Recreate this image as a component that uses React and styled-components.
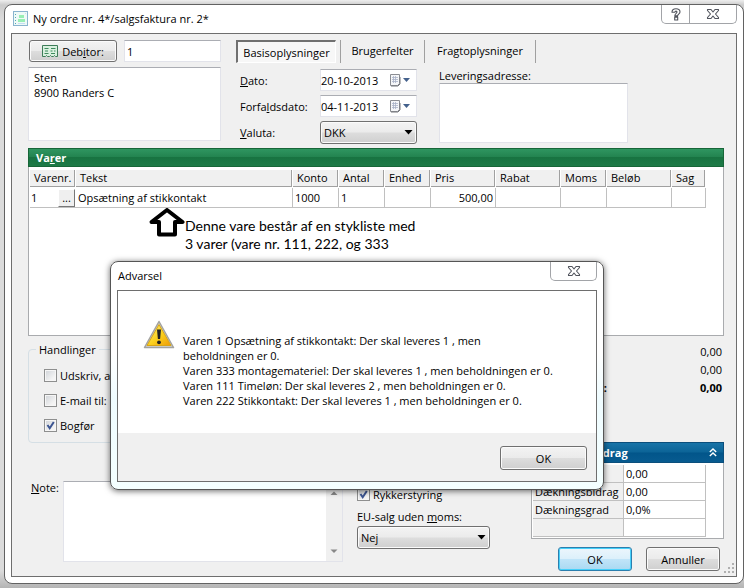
import React from "react";
import styled, { createGlobalStyle, css } from "styled-components";

const Global = createGlobalStyle`
  * { box-sizing: border-box; }
  body {
    margin: 0;
    background: #dcdcdc;
    color: #000;
    font: 11px/15px "Open Sans", "Noto Sans", sans-serif;
  }
  button, input, select, textarea { font: inherit; color: inherit; margin: 0; }
`;

const face = css`
  border: 1px solid #707070;
  border-radius: 3px;
  background: linear-gradient(#f3f3f3, #ebebeb 48%, #dddddd 52%, #cfcfcf);
  box-shadow: inset 0 0 0 1px #fbfbfb;
`;

const field = css`
  border: 1px solid #e2e3ea;
  border-top-color: #abadb3;
  background: #fff;
  outline: none;
`;

const Page = styled.main`
  position: relative;
  min-width: 744px;
  padding: 4px 0 4px 4px;
  background: linear-gradient(#eeeeee, #cccccc 5px, #dcdcdc 20px, #dcdcdc 97%, #b4b4b4);
`;

const OrderWindow = styled.section`
  padding: 0 6px 6px;
  border: 1px solid #626262;
  border-radius: 8px;
  background: #fff;
`;

const TitleBar = styled.header`
  display: flex;
  align-items: flex-start;
  justify-content: space-between;
  height: 28px;
`;

const Title = styled.h1`
  display: flex;
  align-items: center;
  gap: 5px;
  height: 27px;
  margin: 0 0 0 2px;
  font-size: 11px;
  font-weight: 400;
`;

const Caption = styled.div`
  display: flex;
  height: 19px;
  border: 1px solid #a2a4a8;
  border-top: 0;
  border-radius: 0 0 5px 5px;
`;

const CaptionButton = styled.button`
  display: grid;
  place-items: center;
  width: ${(p) => p.$width}px;
  padding: 0;
  border: 0;
  background: none;
  & + & { border-left: 1px solid #a2a4a8; }
`;

const Client = styled.div`
  padding: 6px 12px 5px 16px;
  border: 1px solid #6e6e6e;
  background: #f0f0f0;
`;

const Top = styled.div`
  display: flex;
  gap: 15px;
  height: 108px;
`;

const Customer = styled.div`
  display: flex;
  flex-direction: column;
  gap: 5px;
  width: 193px;
`;

const CustomerLine = styled.div`
  display: flex;
  justify-content: space-between;
  padding-left: 1px;
`;

const PushButton = styled.button`
  ${face}
  display: flex;
  align-items: center;
  justify-content: center;
  gap: 4px;
  width: ${(p) => p.$width}px;
  height: ${(p) => p.$height || 22}px;
  padding: 0;
  ${(p) =>
    p.$primary &&
    css`
      border-color: #2c7fae;
      background: linear-gradient(#ecf6fc, #dcf0fb 48%, #c0e4f8 52%, #a9d9f2);
      box-shadow: inset 0 0 0 1px #45d0fa;
    `}
`;

const TextBox = styled.input`
  ${field}
  width: ${(p) => p.$width}px;
  height: 22px;
  padding: 0 2px;
`;

const TextArea = styled.textarea`
  ${field}
  display: block;
  width: ${(p) => (p.$width ? `${p.$width}px` : "100%")};
  height: ${(p) => p.$height}px;
  padding: 2px 5px;
  resize: none;
`;

const Details = styled.div`
  flex: 1;
`;

const Tabs = styled.div`
  display: flex;
  height: 23px;
`;

const Tab = styled.button`
  width: ${(p) => p.$width}px;
  padding: 0 0 2px;
  border: 0;
  border-right: 1px solid #a0a0a0;
  background: none;
  white-space: nowrap;
  ${(p) =>
    p.$active &&
    css`
      margin-right: 4px;
      padding: 0;
      border: 1px solid #fff;
      border-top: 2px solid #707070;
      border-left: 2px solid #707070;
      background: #f7f7f7;
    `}
`;

const TabRule = styled.span`
  width: 1px;
  background: #a0a0a0;
`;

const DetailColumns = styled.div`
  display: flex;
  gap: 22px;
  padding: 6px 0 0 4px;
`;

const Fields = styled.div`
  display: grid;
  grid-template-columns: 80px 97px;
  grid-auto-rows: 22px;
  row-gap: 4px;
  align-items: center;
`;

const DateField = styled.div`
  ${field}
  display: flex;
  align-items: center;
  height: 22px;
`;

const DateInput = styled.input`
  width: 68px;
  padding: 0;
  border: 0;
  background: none;
  outline: none;
`;

const IconButton = styled.button`
  display: flex;
  padding: 0;
  border: 0;
  background: none;
`;

const SelectFrame = styled.div`
  ${face}
  display: flex;
  align-items: center;
  height: 23px;
  padding-right: 3px;
`;

const Select = styled.select`
  flex: 1;
  padding: 0 3px;
  border: 0;
  background: none;
  appearance: none;
  outline: none;
`;

const Delivery = styled.div`
  display: flex;
  flex-direction: column;
`;

const DeliveryLabel = styled.label`
  line-height: 14px;
`;

const Lines = styled.section`
  position: relative;
`;

const LinesTitle = styled.h2`
  height: 19px;
  margin: 0;
  padding: 1px 7px;
  border: 1px solid #176638;
  background: linear-gradient(#2f9560, #238450 45%, #187341 50%, #1d7a47);
  color: #fff;
  font-size: 11px;
  line-height: 15px;
  font-weight: 700;
`;

const LinesBody = styled.div`
  height: 169px;
  padding: 3px 17px 0 1px;
  border: 1px solid #a9abae;
  border-top: 0;
  background: #fff;
`;

const LinesTable = styled.table`
  width: 100%;
  table-layout: fixed;
  border-spacing: 0;
`;

const HeadCell = styled.th`
  width: ${(p) => (p.$width ? `${p.$width}px` : "auto")};
  height: 18px;
  padding: 0 1px 1px 0;
  background: #fff;
  font-weight: 400;
  text-align: left;
`;

const HeadFace = styled.div`
  height: 17px;
  padding-left: 4px;
  border-right: 1px solid #a0a0a0;
  border-bottom: 1px solid #a0a0a0;
  background: #f0f0f0;
  line-height: 16px;
  white-space: nowrap;
`;

const Cell = styled.td`
  height: 20px;
  padding: 0 2px;
  border-right: 1px solid #c0c0c0;
  border-bottom: 1px solid #c0c0c0;
  text-align: ${(p) => p.$align || "left"};
  white-space: nowrap;
`;

const NumberCell = styled(Cell)`
  padding: 0 1px;
  border-right: 0;
`;

const NumberLine = styled.div`
  display: flex;
  align-items: center;
  justify-content: space-between;
`;

const Lookup = styled.button`
  width: 17px;
  height: 18px;
  padding: 0;
  border: 1px solid #fff;
  border-right-color: #777;
  border-bottom-color: #777;
  background: #efefef;
  line-height: 8px;
`;

const Callout = styled.div`
  position: absolute;
  top: 60px;
  left: 121px;
  display: flex;
`;

const CalloutText = styled.p`
  margin: 9px 0 0;
  font: 14px/18px Lato, sans-serif;
`;

const Lower = styled.div`
  display: flex;
  justify-content: space-between;
`;

const LowerLeft = styled.div`
  width: 462px;
  padding-top: 6px;
`;

const Actions = styled.fieldset`
  height: 101px;
  margin: 0;
  padding: 6px 15px 0;
  border: 1px solid #d5dfe5;
  border-radius: 4px;
`;

const Legend = styled.legend`
  margin-left: -8px;
  padding: 0 3px;
`;

const Check = styled.label`
  display: flex;
  align-items: center;
  gap: 3px;
  height: ${(p) => p.$height}px;
  white-space: nowrap;
`;

const Tick = styled.span`
  position: relative;
  display: flex;
  width: 13px;
  height: 13px;
  svg { position: absolute; inset: 0; display: none; pointer-events: none; }
  input:checked + svg { display: block; }
`;

const TickInput = styled.input`
  width: 13px;
  height: 13px;
  appearance: none;
  border: 1px solid #8e8f8f;
  background: linear-gradient(135deg, #cfd3d8, #f4f4f4 75%);
  box-shadow: inset 0 0 0 1px #f6f6f6;
`;

const NoteRow = styled.div`
  display: flex;
  align-items: flex-start;
  margin-top: 38px;
`;

const NoteLabel = styled.label`
  width: 35px;
  padding-left: 3px;
  line-height: 13px;
`;

const NoteBox = styled.div`
  ${field}
  display: flex;
  width: 280px;
  height: 81px;
`;

const NoteInput = styled.textarea`
  flex: 1;
  border: 0;
  background: none;
  outline: none;
  resize: none;
`;

const ScrollTrack = styled.div`
  display: flex;
  flex-direction: column;
  justify-content: space-between;
  align-items: center;
  width: 16px;
  padding: 9px 0 7px;
  background: #f0f0f0;
`;

const Options = styled.div`
  width: 133px;
  margin-left: 14px;
  padding-top: 4px;
`;

const OptionLabel = styled.label`
  display: block;
  padding: 6px 0 2px;
`;

const LowerRight = styled.div`
  width: 193px;
`;

const Totals = styled.div`
  display: grid;
  grid-template-columns: 76px 1fr;
  height: 106px;
  padding: 7px 2px 0 0;
  grid-auto-rows: 18px;
  line-height: 18px;
  text-align: right;
`;

const Margin = styled.section`
  border: 1px solid #a9abae;
  background: #fff;
`;

const MarginTitle = styled.h2`
  display: flex;
  align-items: center;
  justify-content: space-between;
  height: 21px;
  margin: -1px -1px 0;
  padding: 0 6px;
  border: 1px solid #0b4f7c;
  background: linear-gradient(#1874a8, #0c6497 48%, #02558a 52%, #075b90);
  color: #fff;
  font-size: 11px;
  font-weight: 700;
`;

const MarginTable = styled.table`
  width: 173px;
  margin: 2px 0 1px 1px;
  table-layout: fixed;
  border-spacing: 0;
`;

const MarginLabel = styled.th`
  width: 91px;
  height: 18px;
  padding: 0 2px;
  border-right: 1px solid #c0c0c0;
  border-bottom: 1px solid #c0c0c0;
  background: #f0f0f0;
  font-weight: 400;
  text-align: left;
  white-space: nowrap;
`;

const MarginValue = styled.td`
  padding: 0 2px;
  border-right: 1px solid #c0c0c0;
  border-bottom: 1px solid #c0c0c0;
`;

const Buttons = styled.div`
  display: flex;
  justify-content: flex-end;
  gap: 14px;
  padding: 8px 4px 0 0;
`;

const Grip = styled.svg`
  position: absolute;
  right: 9px;
  bottom: 14px;
`;

const Dialog = styled.section`
  position: absolute;
  top: 261px;
  left: 110px;
  width: 494px;
  padding: 0 6px 7px;
  border: 1px solid #555;
  border-radius: 8px;
  background: linear-gradient(#fff 40%, #effcff 60%, #f4ffff);
  box-shadow: 0 1px 6px rgba(0, 0, 0, 0.6);
`;

const DialogBar = styled.header`
  display: flex;
  justify-content: space-between;
  height: 28px;
`;

const DialogTitle = styled.h2`
  margin: 6px 0 0 1px;
  font-size: 11px;
  font-weight: 400;
`;

const DialogBody = styled.div`
  border: 1px solid #6e6e6e;
  background: #fff;
`;

const Message = styled.div`
  display: flex;
  gap: 8px;
  height: 142px;
  padding: 29px 0 0 25px;
`;

const MessageText = styled.p`
  margin: 13px 0 0;
  white-space: nowrap;
`;

const DialogFoot = styled.footer`
  display: flex;
  justify-content: flex-end;
  padding: 13px 9px 11px;
  background: #f0f0f0;
`;

const CloseIcon = () => (
  <svg width="14" height="12" viewBox="0 0 14 12">
    <path
      d="M1.5 1.5H5L7 4l2-2.5h3.5v1L9.5 6l3 3.5v1H9L7 8l-2 2.5H1.5v-1l3-3.5-3-3.5z"
      fill="#fff"
      stroke="#50535c"
      strokeWidth="1.1"
      strokeLinejoin="round"
    />
  </svg>
);

const HelpIcon = () => (
  <svg width="10" height="13" viewBox="0 0 10 13">
    <path
      d="M1 4.2C1 2 2.600.7 5 .7s4 1.300 4 3.200c0 2-2.400 2.400-2.400 4H3.800C3.800 5.600 6 5.300 6 4.100 6 3.400 5.600 3.100 5 3.100s-1 .5-1.100 1.100zM3.700 9.100h3v2.900h-3z"
      fill="#fff"
      stroke="#50535c"
      strokeWidth="1.1"
      strokeLinejoin="round"
    />
  </svg>
);

const AppIcon = () => (
  <svg width="15" height="15" viewBox="0 0 15 15">
    <rect x=".5" y=".5" width="14" height="14" fill="#effaf7" stroke="#8ab4cf" />
    <path d="M6 4h5v3H6zM5 8h7v3H5z" fill="#98efb4" />
    <path d="M2 3h1v1H2zM2 6h1v1H2zM2 9h1v1H2zM2 12h1v1H2z" fill="#55a9b8" />
    <path d="M12 2h1v1h-1zM5 12h7v1H5z" fill="#c5dff2" />
  </svg>
);

const CardIcon = () => (
  <svg width="16" height="13" viewBox="0 0 16 13">
    <path d="M.5.5h15v11h-2l-1-1-1 1h-2l-1-1-1 1h-2l-1-1-1 1h-3z" fill="#d9f0df" stroke="#3d7c58" />
    <path d="M2.500 3.500h4M9 3.500h4.500M3 6h3M8.500 6h2M12 6h1.500M2.500 8.500h4M9 8.500h4" stroke="#3d8a5c" strokeWidth="1.200" />
  </svg>
);

const CalendarIcon = () => (
  <svg width="22" height="13" viewBox="0 0 22 13">
    <path d="M1.500.5h9v9l-2 2h-7z" fill="#f5f6f8" stroke="#8b8d92" />
    <path d="M3 3.500h6M3 5.500h6M3 7.500h6M4.500 2v7M6.500 2v7" stroke="#a9b3c6" strokeWidth=".8" />
    <path d="M2 12h7l2-2V3" fill="none" stroke="#77797e" />
    <path d="M14 4h7l-3.500 4z" fill="#44618c" />
  </svg>
);

const DownArrow = () => (
  <svg width="9" height="5" viewBox="0 0 9 5">
    <path d="M.5 0h8l-4 4.500z" fill="#000" />
  </svg>
);

const ScrollArrow = ({ up }) => (
  <svg width="8" height="5" viewBox="0 0 8 5">
    <path d={up ? "M.5 4h7L4 .5z" : "M.5.5h7L4 4z"} fill="#888" />
  </svg>
);

const CheckMark = () => (
  <svg width="13" height="13" viewBox="0 0 13 13">
    <path d="M3.500 6l2.200 3.200L9.800 3" fill="none" stroke="#3c5592" strokeWidth="2" />
  </svg>
);

const UpArrow = () => (
  <svg width="36" height="29" viewBox="0 0 36 29">
    <path d="M18 2L33.500 14H26v12.500H10V14H2.500z" fill="#fff" stroke="#000" strokeWidth="4" strokeLinejoin="round" />
  </svg>
);

const Chevrons = () => (
  <svg width="8" height="9" viewBox="0 0 8 9">
    <path d="M.8 4L4 1l3.200 3M.8 8L4 5l3.200 3" fill="none" stroke="#fff" strokeWidth="1.400" />
  </svg>
);

const WarningIcon = () => (
  <svg width="32" height="29" viewBox="0 0 32 29">
    <defs>
      <linearGradient id="amber" x1="0" y1="0" x2="1" y2="1">
        <stop offset="0" stopColor="#fff27a" />
        <stop offset=".55" stopColor="#fbcf1c" />
        <stop offset="1" stopColor="#ee9a06" />
      </linearGradient>
    </defs>
    <path d="M16 1.500L30.500 27.500h-29z" fill="#d4d4d0" stroke="#a3a3a0" strokeWidth="1.500" strokeLinejoin="round" />
    <path d="M16 4.500L28 25.500H4z" fill="url(#amber)" stroke="#d9a514" strokeWidth="1" strokeLinejoin="round" />
    <path d="M14 9.500h4l-.9 9.500h-2.200z" fill="#222" />
    <circle cx="16" cy="22.300" r="1.900" fill="#222" />
  </svg>
);

function CheckBox({ label, checked, height }) {
  return (
    <Check $height={height}>
      <Tick>
        <TickInput type="checkbox" defaultChecked={checked} />
        <CheckMark />
      </Tick>
      {label}
    </Check>
  );
}

function DatePicker({ id, value }) {
  return (
    <DateField>
      <DateInput id={id} defaultValue={value} />
      <IconButton type="button" aria-label="Kalender">
        <CalendarIcon />
      </IconButton>
    </DateField>
  );
}

function DropDown({ id, value }) {
  return (
    <SelectFrame>
      <Select id={id} defaultValue={value}>
        <option>{value}</option>
      </Select>
      <DownArrow />
    </SelectFrame>
  );
}

const columns = [
  ["Varenr.", 46],
  ["Tekst", 0],
  ["Konto", 46],
  ["Antal", 46],
  ["Enhed", 46],
  ["Pris", 65],
  ["Rabat", 65],
  ["Moms", 46],
  ["Beløb", 65],
  ["Sag", 34],
];

const marginRows = [
  ["", "0,00"],
  ["Dækningsbidrag", "0,00"],
  ["Dækningsgrad", "0,0%"],
  ["", ""],
];

export default function App() {
  return (
    <Page>
      <Global />
      <OrderWindow>
        <TitleBar>
          <Title>
            <AppIcon />
            Ny ordre nr. 4*/salgsfaktura nr. 2*
          </Title>
          <Caption>
            <CaptionButton $width={27} type="button" aria-label="Hjælp">
              <HelpIcon />
            </CaptionButton>
            <CaptionButton $width={47} type="button" aria-label="Luk">
              <CloseIcon />
            </CaptionButton>
          </Caption>
        </TitleBar>
        <Client>
          <Top>
            <Customer>
              <CustomerLine>
                <PushButton $width={88} type="button">
                  <CardIcon />
                  <span>Deb<u>i</u>tor:</span>
                </PushButton>
                <TextBox $width={97} aria-label="Debitor" defaultValue="1" />
              </CustomerLine>
              <TextArea $height={74} aria-label="Adresse" defaultValue={"Sten\n8900 Randers C"} />
            </Customer>
            <Details>
              <Tabs role="tablist">
                <Tab $active $width={100} role="tab">Basisoplysninger</Tab>
                <TabRule />
                <Tab $width={84} role="tab">Brugerfelter</Tab>
                <Tab $width={111} role="tab">Fragtoplysninger</Tab>
              </Tabs>
              <DetailColumns>
                <Fields>
                  <label htmlFor="dato"><u>D</u>ato:</label>
                  <DatePicker id="dato" value="20-10-2013" />
                  <label htmlFor="forfald">Forfa<u>l</u>dsdato:</label>
                  <DatePicker id="forfald" value="04-11-2013" />
                  <label htmlFor="valuta"><u>V</u>aluta:</label>
                  <DropDown id="valuta" value="DKK" />
                </Fields>
                <Delivery>
                  <DeliveryLabel htmlFor="levering">Leverin<u>g</u>sadresse:</DeliveryLabel>
                  <TextArea id="levering" $width={189} $height={60} />
                </Delivery>
              </DetailColumns>
            </Details>
          </Top>

          <Lines>
            <LinesTitle>Va<u>r</u>er</LinesTitle>
            <LinesBody>
              <LinesTable>
                <thead>
                  <tr>
                    {columns.map(([name, width]) => (
                      <HeadCell key={name} $width={width}>
                        <HeadFace>{name}</HeadFace>
                      </HeadCell>
                    ))}
                  </tr>
                </thead>
                <tbody>
                  <tr>
                    <NumberCell>
                      <NumberLine>
                        1<Lookup type="button" aria-label="Vælg vare">...</Lookup>
                      </NumberLine>
                    </NumberCell>
                    <Cell>Opsætning af stikkontakt</Cell>
                    <Cell>1000</Cell>
                    <Cell>1</Cell>
                    <Cell />
                    <Cell $align="right">500,00</Cell>
                    <Cell />
                    <Cell />
                    <Cell />
                    <Cell />
                  </tr>
                </tbody>
              </LinesTable>
            </LinesBody>
            <Callout>
              <UpArrow />
              <CalloutText>
                Denne vare består af en stykliste med
                <br />3 varer (vare nr. 111, 222, og 333
              </CalloutText>
            </Callout>
          </Lines>

          <Lower>
            <LowerLeft>
              <Actions>
                <Legend>Handlinger</Legend>
                <CheckBox height={25} label="Udskriv, a" />
                <CheckBox height={25} label="E-mail til:" />
                <CheckBox height={25} label="Bogfør" checked />
              </Actions>
              <NoteRow>
                <NoteLabel htmlFor="note"><u>N</u>ote:</NoteLabel>
                <NoteBox>
                  <NoteInput id="note" />
                  <ScrollTrack>
                    <ScrollArrow up />
                    <ScrollArrow />
                  </ScrollTrack>
                </NoteBox>
                <Options>
                  <CheckBox height={18} label="Rykkerstyring" checked />
                  <OptionLabel htmlFor="eu">EU-salg uden <u>m</u>oms:</OptionLabel>
                  <DropDown id="eu" value="Nej" />
                </Options>
              </NoteRow>
            </LowerLeft>
            <LowerRight>
              <Totals>
                <span />
                <span>0,00</span>
                <span />
                <span>0,00</span>
                <b>:</b>
                <b>0,00</b>
              </Totals>
              <Margin>
                <MarginTitle>
                  Dækningsbidrag
                  <IconButton type="button" aria-label="Skjul">
                    <Chevrons />
                  </IconButton>
                </MarginTitle>
                <MarginTable>
                  <tbody>
                    {marginRows.map(([name, value], i) => (
                      <tr key={i}>
                        <MarginLabel scope="row">{name}</MarginLabel>
                        <MarginValue>{value}</MarginValue>
                      </tr>
                    ))}
                  </tbody>
                </MarginTable>
              </Margin>
              <Buttons>
                <PushButton $width={74} $height={24} $primary type="button">OK</PushButton>
                <PushButton $width={74} $height={24} type="button">Annuller</PushButton>
              </Buttons>
            </LowerRight>
          </Lower>
        </Client>
      </OrderWindow>
      <Grip width="11" height="11" viewBox="0 0 11 11">
        <path d="M8 0h2v2H8zM4 4h2v2H4zM8 4h2v2H8zM0 8h2v2H0zM4 8h2v2H4zM8 8h2v2H8z" fill="#b0b0b0" />
      </Grip>

      <Dialog role="dialog" aria-labelledby="advarsel">
        <DialogBar>
          <DialogTitle id="advarsel">Advarsel</DialogTitle>
          <Caption>
            <CaptionButton $width={45} type="button" aria-label="Luk advarsel">
              <CloseIcon />
            </CaptionButton>
          </Caption>
        </DialogBar>
        <DialogBody>
          <Message>
            <WarningIcon />
            <MessageText>
              Varen 1 Opsætning af stikkontakt: Der skal leveres 1 , men
              <br />
              beholdningen er 0.
              <br />
              Varen 333 montagemateriel: Der skal leveres 1 , men beholdningen er 0.
              <br />
              Varen 111 Timeløn: Der skal leveres 2 , men beholdningen er 0.
              <br />
              Varen 222 Stikkontakt: Der skal leveres 1 , men beholdningen er 0.
            </MessageText>
          </Message>
          <DialogFoot>
            <PushButton $width={87} $height={24} type="button">OK</PushButton>
          </DialogFoot>
        </DialogBody>
      </Dialog>
    </Page>
  );
}
